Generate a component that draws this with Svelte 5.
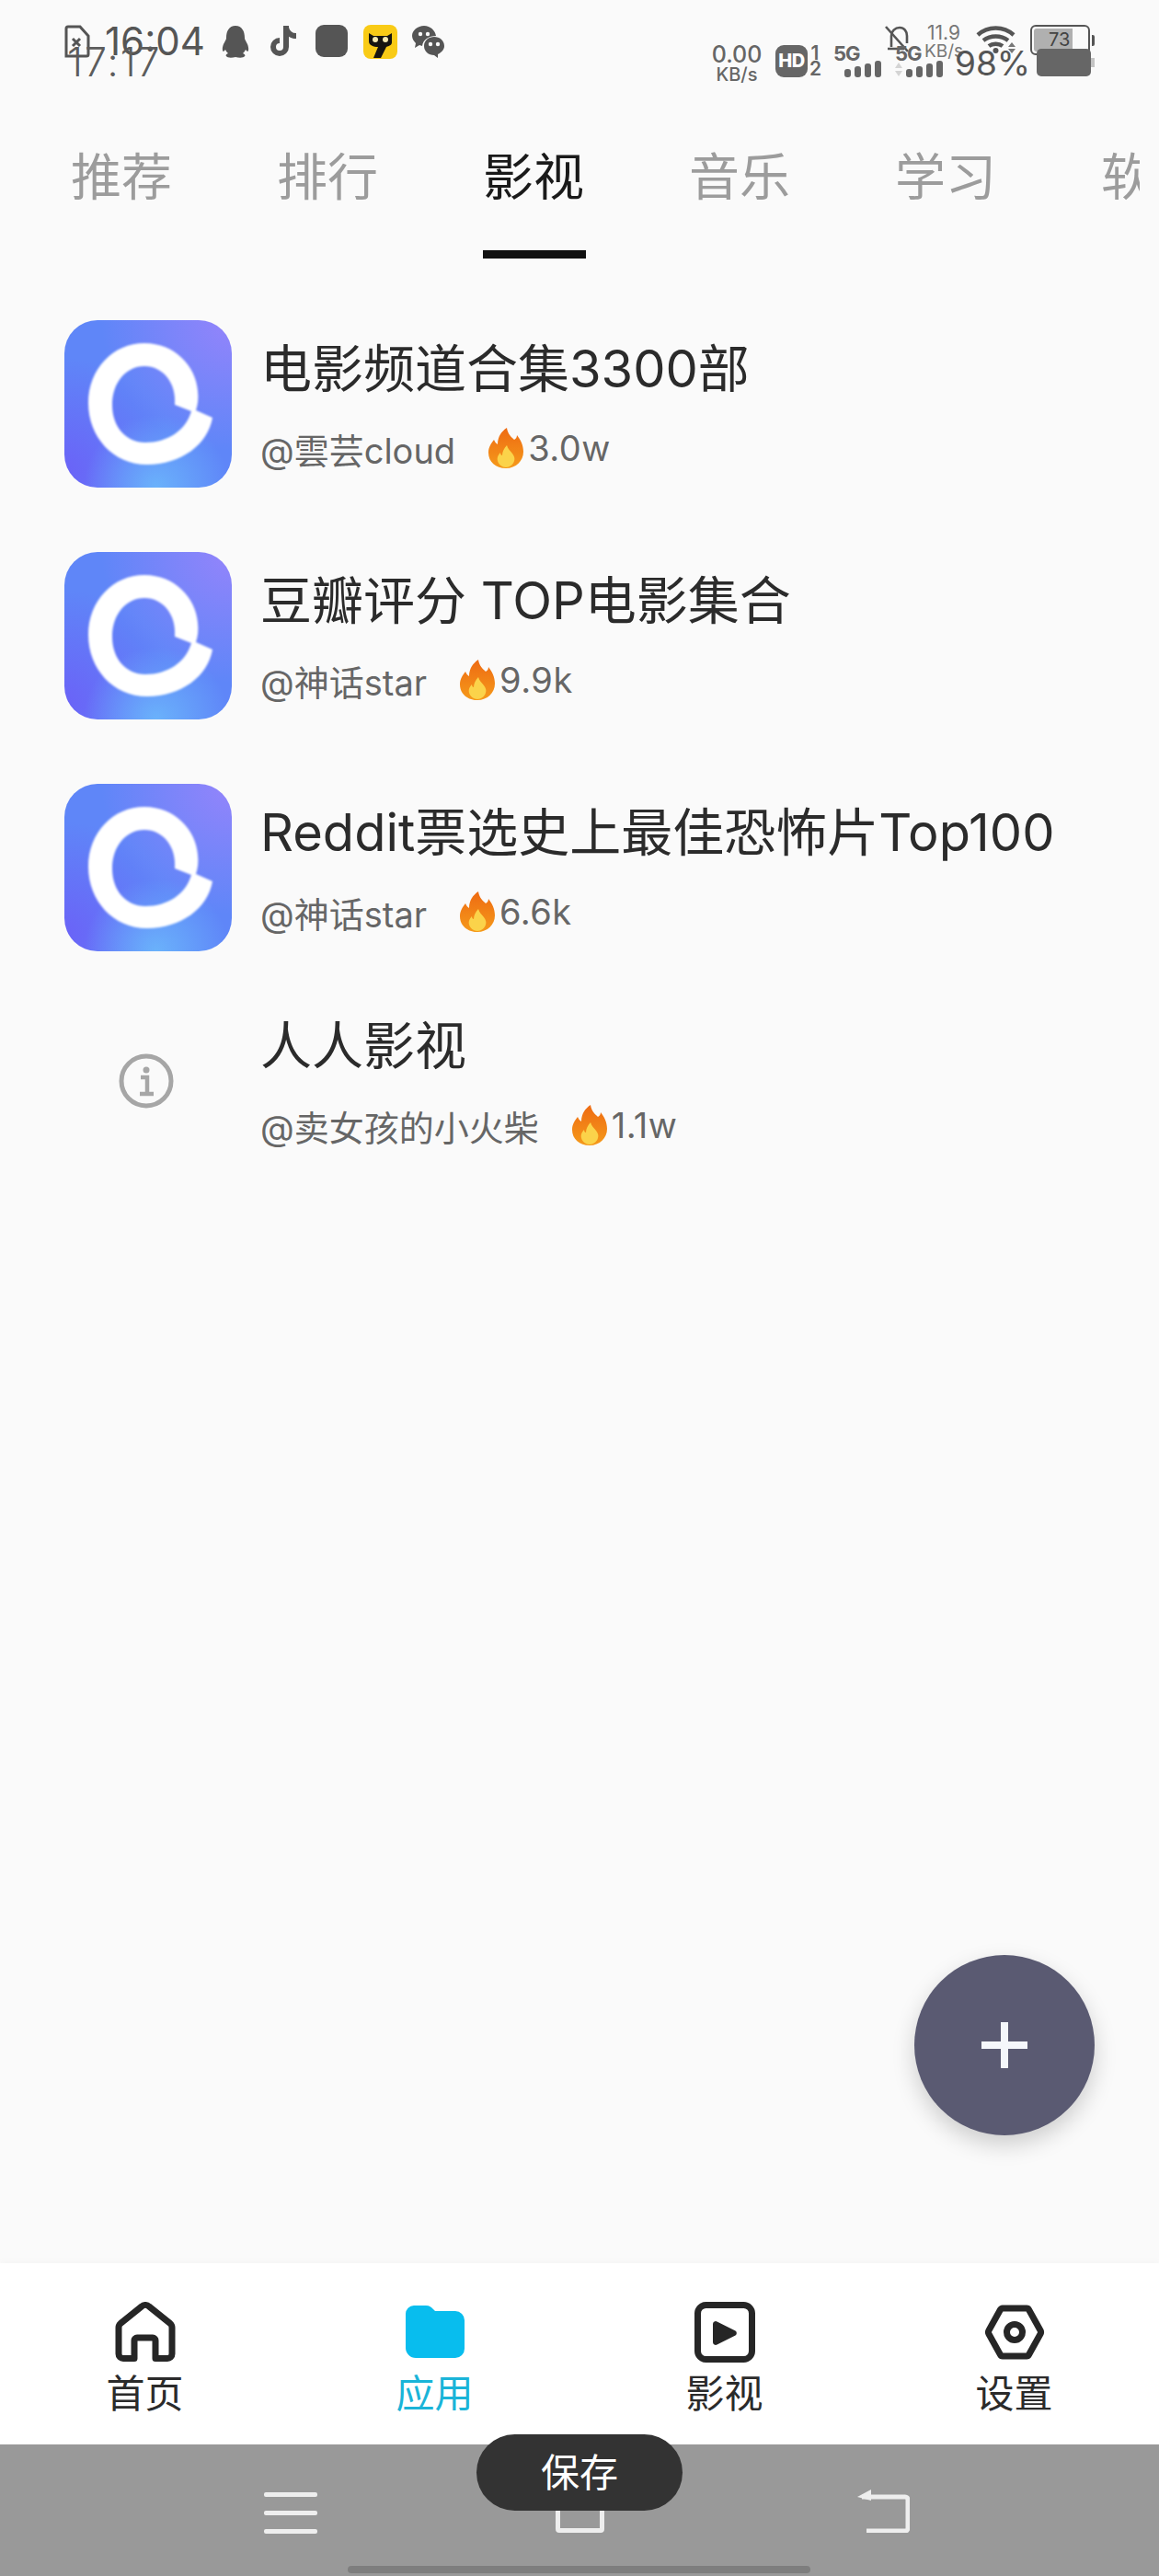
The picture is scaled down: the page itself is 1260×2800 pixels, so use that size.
<script lang="ts">
  const tabs = ['推荐', '排行', '影视', '音乐', '学习', '软件'];
  const activeTab = '影视';

  const rows = [
    { title: '电影频道合集3300部', author: '@雲芸cloud', heat: '3.0w', icon: true },
    { title: '豆瓣评分 TOP电影集合', author: '@神话star', heat: '9.9k', icon: true },
    { title: 'Reddit票选史上最佳恐怖片Top100', author: '@神话star', heat: '6.6k', icon: true },
    { title: '人人影视', author: '@卖女孩的小火柴', heat: '1.1w', icon: false }
  ];

  const nav = [
    { id: 'home', label: '首页' },
    { id: 'apps', label: '应用' },
    { id: 'video', label: '影视' },
    { id: 'settings', label: '设置' }
  ];

  const bars = [0, 1, 2, 3];
</script>

{#snippet signal(small)}
  <span class="signal" class:small>
    <span class="gen">5G</span>
    {#if small}
      <svg class="updown" viewBox="0 0 8 15" fill="#d4d4d4"><path d="M4 0l4 6H0zM4 15L0 9h8z" /></svg>
    {/if}
    <span class="bars">
      {#each bars as b (b)}
        <i style="height: {9 + b * 3}px"></i>
      {/each}
    </span>
  </span>
{/snippet}

<div class="page">
  <!-- two status bars captured on top of each other -->
  <div class="status top">
    <div class="side">
      <svg class="file" viewBox="0 0 28 36" fill="none" stroke="#555" stroke-width="3"><path d="M2 34V4a2 2 0 0 1 2-2h13l9 10v20a2 2 0 0 1-2 2z" /><path d="M9 15l8 8M17 15l-8 8" /></svg>
      <span class="clock">16:04</span>
      <svg class="qq" viewBox="0 0 30 36" fill="#555"><path d="M15 1c7 0 10 6 10 13 0 2 1 3 3 7 2 5 1 8 0 8l-2-2c-1 2-2 3-3 4 2 1 3 2 2 3-1 2-6 2-10 1-4 1-9 1-10-1-1-1 0-2 2-3-1-1-2-2-3-4l-2 2c-1 0-2-3 0-8 2-4 3-5 3-7C5 7 8 1 15 1z" /></svg>
      <svg class="douyin" viewBox="0 0 32 35" fill="none" stroke="#555" stroke-width="6"><path d="M18 1v23a7 7 0 1 1-7-7" /><path d="M18 3c1 5 5 9 11 9" /></svg>
      <span class="square"></span>
      <svg class="cat" viewBox="0 0 37 37"><rect width="37" height="37" rx="8" fill="#f9cb16" /><path d="M6 9l5 3h15l5-3v10c0 3-3 4-6 5l-6 12h-8l5-12c-5 0-10-2-10-6z" fill="#161410" /><circle cx="13" cy="16" r="3" fill="#f4e9b0" /><circle cx="24" cy="16" r="3" fill="#f4e9b0" /></svg>
      <svg class="wechat" viewBox="0 0 35 36" fill="#555"><path d="M13 1C6 1 0 6 0 12c0 3 2 6 4 8l-1 5 5-3 3 1c1-7 7-11 15-11C25 6 20 1 13 1z" /><path d="M24 13c-6 0-11 4-11 10s5 10 11 10l4 3v-4c4-2 7-5 7-9 0-6-5-10-11-10z" /><circle cx="20" cy="21" r="2.2" fill="#fafafa" /><circle cx="28" cy="21" r="2.2" fill="#fafafa" /><circle cx="9" cy="10" r="2.2" fill="#fafafa" /><circle cx="17" cy="10" r="2.2" fill="#fafafa" /></svg>
    </div>
    <div class="side">
      <svg class="bell" viewBox="0 0 29 30" fill="none" stroke="#555" stroke-width="2.6"><path d="M7 24V12c0-5 4-9 9-9s8 4 8 9v8M3 26h18" /><path d="M1 2l24 27" /></svg>
      <span class="speed thin"><b>11.9</b><small>KB/s</small></span>
      <svg class="wifi" viewBox="0 0 43 32" fill="none" stroke="#555" stroke-width="4.5"><path d="M2 11c11-10 28-10 39 0M8 17c8-6 19-6 27 0M14 23c4-3 11-3 15 0" /><circle cx="21.500" cy="28" r="3" fill="#555" stroke="none" /><path d="M39 19l4 5h-8zM39 31l-4-5h8z" fill="#777" stroke="none" /></svg>
      <span class="battery-light">
        <span class="battery-body">
          <span class="battery-fill"></span>
          <span class="battery-num">73</span>
        </span>
        <span class="nub"></span>
      </span>
    </div>
  </div>

  <div class="status bottom">
    <div class="side">
      <span class="clock second">17:17</span>
    </div>
    <div class="side">
      <span class="speed"><b>0.00</b><small>KB/s</small></span>
      <span class="sim">
        <span class="hd">HD</span>
        <span class="slots"><i>1</i><i>2</i></span>
      </span>
      {@render signal(false)}
      {@render signal(true)}
      <span class="percent">98%</span>
      <span class="battery-dark"><span class="nub"></span></span>
    </div>
  </div>

  <nav class="tabs">
    {#each tabs as t (t)}
      <div class="tab" class:active={t === activeTab}>
        <span>{t}</span>
      </div>
    {/each}
  </nav>

  <ul class="list">
    {#each rows as r (r.title)}
      <li class:missing={!r.icon}>
        {#if r.icon}
          <span class="logo">
            <svg viewBox="0 0 182 182" width="182" height="182"><path fill="#fff" fill-rule="evenodd" d="M161 106C156 135 127 157 90 157C53 157 26 127 26 90C26 53 53 25 87 25C120 25 143 50 145 77C146 85 145 92 143 98ZM120 92C122 68 107 50 87 50C67 50 52 68 52 92C52 116 67 133 88 133C112 133 132 120 138 99Z" /></svg>
          </span>
        {:else}
          <span class="placeholder">
            <svg viewBox="0 0 60 60" width="60" height="60" fill="none" stroke="#a6a6a6"><circle cx="30" cy="30" r="27" stroke-width="5" /><circle cx="30" cy="18" r="3.500" fill="#a6a6a6" stroke="none" /><path d="M24 26h7v17M23 44h15" stroke-width="4.500" /></svg>
          </span>
        {/if}
        <div class="text">
          <div class="title">{r.title}</div>
          <div class="meta">
            <span class="author">{r.author}</span>
            <svg class="flame" viewBox="0 0 38 44">
              <defs>
                <linearGradient id="flame-{r.heat}" x1="0" y1="0" x2="0" y2="1"><stop offset="0" stop-color="#ee6a12" /><stop offset="1" stop-color="#f59a1b" /></linearGradient>
              </defs>
              <path fill="url(#flame-{r.heat})" d="M20 0c1 7 5 10 8 13 2-1 3-3 3-5 4 5 7 11 7 18 0 10-8 18-19 18S0 37 0 27c0-6 3-10 6-14 1 2 2 4 4 5C10 10 14 4 20 0z" />
              <path fill="#fbd34a" d="M20 19c1 4 4 6 6 9 2 3 3 5 2 8-1 4-5 7-9 7s-8-3-9-7c-1-4 1-7 3-9 0 2 1 3 2 3 0-4 2-8 5-11z" />
            </svg>
            <span class="heat">{r.heat}</span>
          </div>
        </div>
      </li>
    {/each}
  </ul>

  <button type="button" class="fab" aria-label="添加">
    <svg viewBox="0 0 50 50" width="50" height="50" fill="#f5f7fb"><rect x="21" width="8" height="50" /><rect y="21" width="50" height="8" /></svg>
  </button>

  <footer class="bar">
    {#each nav as n (n.id)}
      <div class="item" class:current={n.id === 'apps'}>
        {#if n.id === 'home'}
          <svg viewBox="0 0 66 66" width="66" height="66" fill="none" stroke="#262626" stroke-width="7" stroke-linejoin="round"><path d="M21 61.500H9a5 5 0 0 1-5-5V28a6 6 0 0 1 2-4.500L29 5a6 6 0 0 1 8 0l23 18.500a6 6 0 0 1 2 4.500v28.500a5 5 0 0 1-5 5H44V42a3 3 0 0 0-3-3H24a3 3 0 0 0-3 3z" /></svg>
        {:else if n.id === 'apps'}
          <svg viewBox="0 0 66 66" width="66" height="66" fill="#08bdee"><path d="M1 13a9 9 0 0 1 9-9h13c4 0 6 2 8 4l2 2h22a10 10 0 0 1 10 10v31a10 10 0 0 1-10 10H12A11 11 0 0 1 1 50z" /></svg>
        {:else if n.id === 'video'}
          <svg viewBox="0 0 66 66" width="66" height="66"><rect x="3.500" y="3.500" width="59" height="59" rx="9" fill="none" stroke="#262626" stroke-width="7" /><path d="M20 24a3 3 0 0 1 4.500-2.500l20 10a3 3 0 0 1 0 5l-20 10A3 3 0 0 1 20 44z" fill="#262626" /></svg>
        {:else}
          <svg viewBox="0 0 66 66" width="66" height="66" fill="none" stroke="#262626" stroke-width="7" stroke-linejoin="round"><path d="M20 7h26a3 3 0 0 1 2.500 1.500L61 31a4 4 0 0 1 0 4L48.500 57.500A3 3 0 0 1 46 59H20a3 3 0 0 1-2.500-1.500L5 35a4 4 0 0 1 0-4L17.500 8.500A3 3 0 0 1 20 7z" /><circle cx="33" cy="33" r="8.500" /></svg>
        {/if}
        <span>{n.label}</span>
      </div>
    {/each}
  </footer>

  <div class="sysnav">
    <svg class="menu" viewBox="0 0 58 45" fill="#eee"><rect width="58" height="5" y="0" rx="2" /><rect width="58" height="5" y="20" rx="2" /><rect width="58" height="5" y="40" rx="2" /></svg>
    <span class="recent"></span>
    <svg class="back" viewBox="0 0 58 48" fill="none" stroke="#eee" stroke-width="5"><path d="M6 9h47a3 3 0 0 1 3 3v31a3 3 0 0 1-3 3H11" /><path d="M16 1v12L1 9z" fill="#eee" stroke="none" /></svg>
    <span class="indicator"></span>
  </div>

  <div class="toast">保存</div>
</div>

<style>
  :global(body) {
    margin: 0;
    background: #fafafa;
  }
  .page {
    position: relative;
    width: 1260px;
    height: 2800px;
    display: flex;
    flex-direction: column;
    overflow: hidden;
    background: #fafafa;
    font-family: Inter, "Noto Sans CJK SC", sans-serif;
    color: #262626;
  }

  /* the two captured status bars overlap, so they float above the flow */
  .status {
    position: absolute;
    left: 0;
    right: 0;
    display: flex;
    justify-content: space-between;
    align-items: flex-start;
    padding: 0 70px;
    color: #555;
  }
  .status.top {
    top: 27px;
  }
  .status.bottom {
    top: 48px;
    padding-left: 73px;
  }
  .side {
    display: flex;
    align-items: flex-start;
  }
  .clock {
    font-size: 42px;
    line-height: 36px;
    margin: 0 18px 0 16px;
  }
  .clock.second {
    margin: 2px 0 0;
    color: #5c5c5c;
    font-size: 43px;
    line-height: 34px;
    letter-spacing: 2px;
    font-weight: 300;
  }
  .file {
    width: 28px;
    height: 36px;
  }
  .qq {
    width: 30px;
    height: 36px;
    margin-right: 22px;
  }
  .douyin {
    width: 32px;
    height: 35px;
    margin-right: 18px;
  }
  .square {
    width: 35px;
    height: 35px;
    border-radius: 9px;
    background: #555;
    margin-right: 17px;
  }
  .cat {
    width: 37px;
    height: 37px;
    margin-right: 16px;
  }
  .wechat {
    width: 35px;
    height: 36px;
  }
  .bell {
    width: 29px;
    height: 30px;
    margin-right: 14px;
  }
  .speed {
    display: flex;
    flex-direction: column;
    align-items: center;
    width: 56px;
    margin-right: 14px;
    color: #666;
  }
  .speed b {
    font-size: 25px;
    line-height: 22px;
    font-weight: 500;
  }
  .speed small {
    font-size: 20px;
    line-height: 18px;
    margin-top: 2px;
    font-weight: 500;
    white-space: nowrap;
  }
  .speed.thin {
    width: 42px;
    color: #777;
  }
  .speed.thin b {
    font-size: 21px;
    line-height: 17px;
    font-weight: 400;
  }
  .speed.thin small {
    font-size: 19px;
    font-weight: 400;
    margin-top: 4px;
    line-height: 16px;
  }
  .wifi {
    width: 43px;
    height: 32px;
    margin-right: 16px;
  }
  .battery-light {
    display: flex;
    align-items: center;
    gap: 2px;
  }
  .battery-body {
    position: relative;
    box-sizing: border-box;
    width: 65px;
    height: 33px;
    border: 2px solid #555;
    border-radius: 6px;
    padding: 2px;
    background: #fafafa;
  }
  .battery-fill {
    display: block;
    width: 42px;
    height: 100%;
    background: #b0b0b0;
    border-radius: 3px 0 0 3px;
  }
  .battery-num {
    position: absolute;
    left: 18px;
    top: 2px;
    font-size: 20px;
    line-height: 24px;
    color: #444;
  }
  .battery-light .nub {
    width: 3px;
    height: 12px;
    background: #555;
    border-radius: 0 2px 2px 0;
  }
  .sim {
    display: flex;
    gap: 2px;
    margin-right: 14px;
    margin-top: 1px;
  }
  .hd {
    width: 35px;
    height: 35px;
    border-radius: 9px;
    background: #666;
    color: #fff;
    font-size: 20px;
    font-weight: 800;
    line-height: 35px;
    text-align: center;
    letter-spacing: -0.5px;
  }
  .slots {
    display: flex;
    flex-direction: column;
    width: 12px;
  }
  .slots i {
    font-style: normal;
    font-size: 21px;
    line-height: 17px;
    font-weight: 600;
    color: #666;
    text-align: center;
  }
  .signal {
    position: relative;
    width: 52px;
    height: 35px;
    margin: 1px 15px 0 0;
  }
  .signal.small {
    margin-right: 13px;
  }
  .gen {
    position: absolute;
    left: 0;
    top: 0;
    font-size: 22px;
    line-height: 18px;
    font-weight: 700;
    letter-spacing: -1px;
    color: #666;
  }
  .updown {
    position: absolute;
    left: 0;
    top: 19px;
    width: 8px;
    height: 15px;
  }
  .bars {
    position: absolute;
    right: 0;
    bottom: 0;
    display: flex;
    align-items: flex-end;
    gap: 4px;
  }
  .bars i {
    display: block;
    width: 7px;
    border-radius: 3px;
    background: #666;
  }
  .percent {
    font-size: 37px;
    line-height: 36px;
    width: 77px;
    margin: 3px 12px 0 0;
    white-space: nowrap;
  }
  .battery-dark {
    position: relative;
    width: 59px;
    height: 30px;
    margin: 5px 4px 0 0;
    background: #666;
    border-radius: 5px;
  }
  .battery-dark .nub {
    position: absolute;
    right: -4px;
    top: 10px;
    width: 4px;
    height: 10px;
    background: #c4c4c4;
  }

  .tabs {
    display: flex;
    flex-shrink: 0;
    overflow: hidden;
    margin-right: 21px;
    padding: 154px 0 0 20px;
    height: 128px;
  }
  .tab {
    flex: 0 0 224px;
    display: flex;
    flex-direction: column;
    align-items: center;
    font-size: 55px;
    line-height: 76px;
    color: #9c9c9c;
    white-space: nowrap;
    position: relative;
  }
  .tab.active {
    color: #1a1a1a;
  }
  .tab.active::after {
    content: '';
    position: absolute;
    top: 118px;
    left: 57px;
    width: 112px;
    height: 9px;
    background: #111;
  }

  .list {
    list-style: none;
    margin: 0;
    padding: 66px 0 0 70px;
    display: flex;
    flex-direction: column;
    gap: 70px;
    flex: 1;
  }
  .list li {
    display: flex;
    align-items: center;
    gap: 31px;
    height: 182px;
  }
  .list li.missing {
    height: 142px;
  }
  .logo {
    flex: none;
    width: 182px;
    height: 182px;
    border-radius: 36px;
    overflow: hidden;
    background:
      radial-gradient(circle at 55% 100%, #6ab2fb 0, rgba(106, 178, 251, 0) 38%),
      radial-gradient(circle at 100% 0, #9484fb 0, rgba(148, 132, 251, 0) 55%),
      radial-gradient(circle at 0 90%, #6a63f7 0, rgba(106, 99, 247, 0) 50%),
      #5f86f8;
  }
  .logo svg {
    display: block;
    filter: blur(0.8px);
  }
  .placeholder {
    flex: none;
    width: 178px;
    padding-right: 4px;
    display: flex;
    justify-content: center;
  }
  .title {
    font-size: 56px;
    line-height: 66px;
    color: #2b2b2b;
    white-space: nowrap;
  }
  .meta {
    display: flex;
    align-items: center;
    margin-top: 30px;
    height: 46px;
    font-size: 38px;
    color: #666;
    white-space: nowrap;
  }
  .heat {
    letter-spacing: 0.5px;
  }
  .flame {
    width: 38px;
    height: 44px;
    margin-left: 36px;
    margin-right: 5px;
  }

  .fab {
    position: absolute;
    left: 994px;
    top: 2125px;
    width: 196px;
    height: 196px;
    padding: 0;
    border: none;
    border-radius: 50%;
    background: #5a5a72;
    box-shadow: 0 10px 24px rgba(0, 0, 0, 0.18);
    display: flex;
    align-items: center;
    justify-content: center;
  }

  .bar {
    flex: none;
    height: 197px;
    box-sizing: border-box;
    padding-top: 42px;
    background: #fff;
    display: grid;
    grid-template-columns: repeat(4, 1fr);
    box-shadow: 0 -4px 6px rgba(0, 0, 0, 0.015);
  }
  .item {
    display: flex;
    flex-direction: column;
    align-items: center;
    font-size: 42px;
    line-height: 50px;
    color: #2b2b2b;
    gap: 9px;
  }
  .item.current {
    color: #1ab4d8;
  }
  .item svg {
    display: block;
  }

  .sysnav {
    position: relative;
    flex: none;
    height: 143px;
    background: #999;
  }
  .menu {
    position: absolute;
    left: 287px;
    top: 52px;
    width: 58px;
    height: 45px;
  }
  .recent {
    position: absolute;
    left: 604px;
    top: 46px;
    width: 53px;
    height: 50px;
    box-sizing: border-box;
    border: 5px solid #eee;
    border-radius: 4px;
  }
  .back {
    position: absolute;
    left: 931px;
    top: 48px;
    width: 58px;
    height: 48px;
  }
  .indicator {
    position: absolute;
    left: 378px;
    top: 132px;
    width: 503px;
    height: 8px;
    border-radius: 4px;
    background: #7e7e7e;
  }

  .toast {
    position: absolute;
    left: 518px;
    top: 2646px;
    width: 224px;
    height: 83px;
    border-radius: 42px;
    background: #333;
    color: #fff;
    font-size: 42px;
    line-height: 83px;
    text-align: center;
  }
</style>
